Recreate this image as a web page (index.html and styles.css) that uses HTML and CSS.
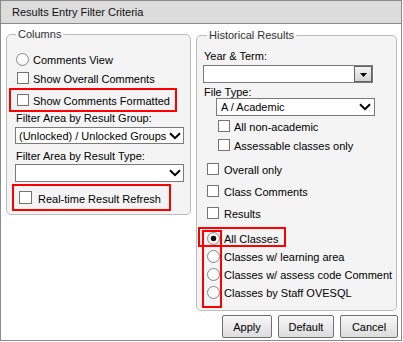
FILE: index.html
```html
<!DOCTYPE html>
<html>
<head>
<meta charset="utf-8">
<title>Results Entry Filter Criteria</title>
<link rel="stylesheet" href="styles.css">
</head>
<body>
<div class="dialog">
  <div class="titlebar">Results Entry Filter Criteria</div>
  <div class="main">
    <fieldset class="group group-left">
      <legend>Columns</legend>
      <label class="row c-r1"><input type="radio" class="rad" name="cv"><span class="txt">Comments View</span></label>
      <label class="row c-r2"><input type="checkbox" class="chk"><span class="txt">Show Overall Comments</span></label>
      <label class="row hl c-hl1"><input type="checkbox" class="chk"><span class="txt">Show Comments Formatted</span></label>
      <div class="flabel">Filter Area by Result Group:</div>
      <div class="sel c-sel1"><span class="val">(Unlocked) / Unlocked Groups</span><svg class="chev" width="12" height="8" viewBox="0 0 12 8"><path d="M1 1.2 L6 6.2 L11 1.2" fill="none" stroke="#000" stroke-width="2"/></svg></div>
      <div class="flabel c-fl2">Filter Area by Result Type:</div>
      <div class="sel c-sel2"><span class="val"></span><svg class="chev" width="12" height="8" viewBox="0 0 12 8"><path d="M1 1.2 L6 6.2 L11 1.2" fill="none" stroke="#000" stroke-width="2"/></svg></div>
      <label class="row hl c-hl2"><input type="checkbox" class="chk chk-lg"><span class="txt">Real-time Result Refresh</span></label>
    </fieldset>
    <div class="right-col">
      <fieldset class="group group-right">
        <legend>Historical Results</legend>
        <div class="flabel">Year &amp; Term:</div>
        <div class="sel h-year"><span class="val"></span><span class="ddbtn"><svg width="7" height="4" viewBox="0 0 7 4"><polygon points="0,0 7,0 3.5,4" fill="#000"/></svg></span></div>
        <div class="flabel h-ftl">File Type:</div>
        <div class="sel h-file"><span class="val">A / Academic</span><svg class="chev" width="12" height="8" viewBox="0 0 12 8"><path d="M1 1.2 L6 6.2 L11 1.2" fill="none" stroke="#000" stroke-width="2"/></svg></div>
        <label class="row h-sub h-sub1"><input type="checkbox" class="chk"><span class="txt">All non-academic</span></label>
        <label class="row h-sub"><input type="checkbox" class="chk"><span class="txt">Assessable classes only</span></label>
        <label class="row h-opt h-opt1"><input type="checkbox" class="chk"><span class="txt">Overall only</span></label>
        <label class="row h-opt"><input type="checkbox" class="chk"><span class="txt">Class Comments</span></label>
        <label class="row h-opt"><input type="checkbox" class="chk"><span class="txt">Results</span></label>
        <div class="radios">
          <label class="row h-rad"><input type="radio" class="rad" name="cls" checked><span class="txt">All Classes</span></label>
          <label class="row h-rad"><input type="radio" class="rad" name="cls"><span class="txt">Classes w/ learning area</span></label>
          <label class="row h-rad"><input type="radio" class="rad" name="cls"><span class="txt">Classes w/ assess code Comment</span></label>
          <label class="row h-rad"><input type="radio" class="rad" name="cls"><span class="txt">Classes by Staff OVESQL</span></label>
          <div class="mark mark-a"></div>
          <div class="mark mark-b"></div>
        </div>
      </fieldset>
      <div class="buttons">
        <button class="btn btn-apply">Apply</button>
        <button class="btn btn-default">Default</button>
        <button class="btn btn-cancel">Cancel</button>
      </div>
    </div>
  </div>
</div>
</body>
</html>
```

FILE: styles.css
```css
* { box-sizing: border-box; }
html, body { margin: 0; padding: 0; background: #fff; }
body {
  font-family: "Liberation Sans", Arial, sans-serif;
  font-size: 11px;
  color: #000;
}
.dialog {
  width: 402px;
  height: 341px;
  border: 1px solid #8c8c8c;
  display: flex;
  flex-direction: column;
  background: #fff;
}
.titlebar {
  height: 23px;
  flex: none;
  background: #dcdcdc;
  border-bottom: 1px solid #8c8c8c;
  padding-left: 11px;
  display: flex;
  align-items: center;
  color: #111;
}
.main {
  display: flex;
  align-items: flex-start;
  padding: 4px 0 0 5px;
  gap: 5px;
}
.group {
  margin: 0;
  min-width: 0;
  border: 1px solid #bcbcbc;
  border-radius: 5px;
  background: #f4f4f4;
}
.group legend {
  font-size: 11px;
  line-height: 13px;
  padding: 0 2px;
  color: #333;
}
.group-left {
  width: 185px;
  padding: 9px 6px 3px 8px;
}
.group-left legend { margin-left: 1px; }
.right-col {
  width: 202px;
  display: flex;
  flex-direction: column;
}
.group-right {
  width: 201px;
  margin-top: 1px;
  padding: 8px 6px 9px 6px;
}
.group-right legend { margin-left: 4px; }

.row {
  display: flex;
  align-items: center;
  white-space: nowrap;
}
.txt { padding-top: 2px; }
.chk {
  appearance: none;
  -webkit-appearance: none;
  margin: 0;
  flex: none;
  width: 12px;
  height: 12px;
  border: 1px solid #747474;
  background: #fff;
}
.chk-lg { width: 13px; height: 13px; }
.rad {
  appearance: none;
  -webkit-appearance: none;
  margin: 0;
  flex: none;
  width: 13px;
  height: 13px;
  border: 1px solid #8a8a8a;
  border-radius: 50%;
  background: radial-gradient(circle at 50% 40%, #fff 45%, #e4e4e4 100%);
}
.rad:checked {
  background: radial-gradient(circle closest-side, #111 0, #111 46%, #fff 58%, #e8e8e8 100%);
}

/* left group */
.c-r1 { height: 18px; }
.c-r1 .rad { margin: 0 4px 0 1px; }
.c-r2 { height: 20px; }
.c-r2 .chk { margin: 0 4px 0 2px; }
.hl { border: 2px solid #f00; }
.c-hl1 { height: 24px; width: 168px; margin-left: -6px; }
.c-hl1 .chk { margin: 0 4px 0 6px; }
.flabel {
  height: 12px;
  line-height: 12px;
  padding-left: 1px;
  white-space: nowrap;
}
.sel {
  display: flex;
  align-items: center;
  background: #fff;
  border: 1px solid #7a7a7a;
  white-space: nowrap;
  overflow: hidden;
}
.sel .val { flex: 1; min-width: 0; overflow: hidden; }
.chev { flex: none; display: block; }
.c-sel1 { margin-top: 3px; height: 17px; padding-left: 3px; }
.c-sel1 .chev { margin-right: 2px; }
.c-fl2 { margin-top: 6px; }
.c-sel2 { margin-top: 2px; height: 18px; padding-left: 3px; }
.c-sel2 .chev { margin-right: 2px; }
.c-hl2 { margin-top: 2px; margin-left: -3px; width: 159px; height: 27px; }
.c-hl2 .chk { margin: 0 6px 0 5px; }

/* right group */
.h-year { margin-top: 3px; height: 18px; width: 170px; }
.ddbtn {
  flex: none;
  width: 18px;
  height: 16px;
  border: 1px solid #626262;
  background: linear-gradient(#f4f4f4, #d4d4d4);
  display: flex;
  align-items: center;
  justify-content: center;
}
.ddbtn svg { display: block; margin-top: 1px; }
.h-ftl { margin-top: 3px; }
.h-file { margin-left: 13px; width: 159px; height: 18px; padding-left: 4px; }
.h-file .chev { margin-right: 3px; }
.h-sub { height: 18px; margin-top: 1px; }
.h-sub .chk { margin: 0 4px 0 15px; }
.h-opt { height: 22px; }
.h-opt1 { margin-top: 4px; }
.h-opt .chk { margin: 0 5px 0 4px; }
.radios { position: relative; margin-top: 5px; }
.h-rad { height: 18px; }
.h-rad .rad { margin: 0 4px 0 4px; }
.mark {
  position: absolute;
  border: 2px solid #f00;
  pointer-events: none;
}
.mark-a { left: -5px; top: -2px; width: 88px; height: 20px; }
.mark-b { left: -1px; top: 1px; width: 20px; height: 78px; }

/* buttons */
.buttons {
  display: flex;
  justify-content: flex-end;
  gap: 6px;
  margin-top: 4px;
}
.btn {
  height: 23px;
  padding: 0;
  font-family: "Liberation Sans", Arial, sans-serif;
  font-size: 11px;
  color: #000;
  border: 1px solid #707070;
  border-radius: 2px;
  background: linear-gradient(#f8f8f8, #dcdcdc);
}
.btn-apply { width: 50px; }
.btn-default { width: 56px; }
.btn-cancel { width: 58px; }
```
